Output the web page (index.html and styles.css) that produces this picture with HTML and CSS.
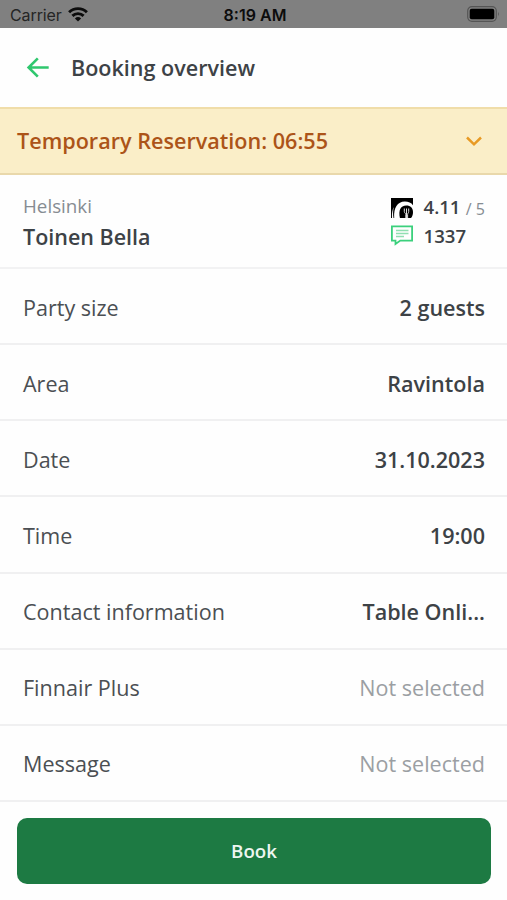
FILE: index.html
```html
<!DOCTYPE html>
<html lang="en">
<head>
<meta charset="utf-8">
<title>Booking overview</title>
<link rel="stylesheet" href="styles.css">
</head>
<body>
<div class="status">
  <div class="status-left">
    <span class="carrier">Carrier</span>
    <svg class="wifi" width="20" height="15" viewBox="0 0 20 15" fill="none" stroke="#0c0c0c" stroke-width="2.9">
      <path d="M1.1 5.3a12.7 12.7 0 0 1 17.8 0"/>
      <path d="M4.4 8.9a8 8 0 0 1 11.2 0"/>
      <path d="M10 14.6 6.9 11.5a4.5 4.5 0 0 1 6.2 0Z" fill="#0c0c0c" stroke="none"/>
    </svg>
  </div>
  <span class="clock">8:19 AM</span>
  <svg class="battery" width="33" height="16" viewBox="0 0 33 16">
    <rect x=".7" y=".7" width="28.6" height="14.6" rx="4.2" fill="none" stroke="#555" stroke-width="1.2"/>
    <rect x="2.7" y="2.7" width="24.6" height="10.6" rx="2" fill="#000"/>
    <path d="M31 5.8q1.8 2.2 0 4.4Z" fill="#555"/>
  </svg>
</div>
<header class="header">
  <svg class="back" width="24" height="22" viewBox="0 0 24 22" fill="none" stroke="#2fc76e" stroke-width="2.6">
    <path d="M22.7 10.5H3M11.8 1.3 2.6 10.5l9.2 9.2"/>
  </svg>
  <h1 class="title">Booking overview</h1>
</header>
<div class="notice">
  <span class="notice-text">Temporary Reservation: 06:55</span>
  <svg width="16" height="10" viewBox="0 0 16 10" fill="none" stroke="#e89a24" stroke-width="2.5"><path d="M1 1.5 8 8.300l7-6.800"/></svg>
</div>
<section class="venue">
  <div class="place">
    <span class="city">Helsinki</span>
    <span class="name">Toinen Bella</span>
  </div>
  <div class="stats">
    <svg width="22" height="20" viewBox="0 0 22 20">
      <path d="M0 0h22v20H0Z" fill="#000"/>
      <path d="M3.200 20C2.400 10 6.500 3.600 13.800 3.600c3.700 0 6.400 1.300 8.200 3.600V20Z" fill="#fff"/>
      <path d="M8.900 20C7.300 12.500 9.300 7.500 15.300 7.500c4.200 0 6.700 2.700 6.700 6.700 0 2.600-.8 4.400-2 5.800Z" fill="#000"/>
      <path d="M1 20c-.3-4.500.3-8 1.800-11-.9 4-.9 7.500-.3 11Z" fill="#fff"/>
      <path d="M13.300 10.500v3c0 1.500 1.500 1.800 1.500 3V20M15.500 10.500V20M17.700 10.500v3c0 1.500-1.100 1.800-1.100 3V20" fill="none" stroke="#e0e0e0" stroke-width="1"/>
    </svg>
    <span class="score">4.11 <small class="out-of">/ 5</small></span>
    <svg width="22" height="20" viewBox="0 0 22 20" fill="none" stroke="#3bd07c" stroke-width="1.8">
      <path d="M.9.4h20.200v14.200H9.300L4.500 18.100V14.600H.9Z"/>
      <path d="M5 4.500h12.500M5 7.500h12.500M5 10.500h8" stroke="#8fdfb1" stroke-width="1.4"/>
    </svg>
    <span class="score">1337</span>
  </div>
</section>
<dl class="rows">
  <div class="row"><dt>Party size</dt><dd>2 guests</dd></div>
  <div class="row"><dt>Area</dt><dd>Ravintola</dd></div>
  <div class="row"><dt>Date</dt><dd>31.10.2023</dd></div>
  <div class="row"><dt>Time</dt><dd>19:00</dd></div>
  <div class="row"><dt>Contact information</dt><dd>Table Onli...</dd></div>
  <div class="row"><dt>Finnair Plus</dt><dd class="empty">Not selected</dd></div>
  <div class="row"><dt>Message</dt><dd class="empty">Not selected</dd></div>
</dl>
<footer class="footer"><button class="book">Book</button></footer>
</body>
</html>
```
FILE: styles.css
```css
* { box-sizing: border-box; }
body {
  margin: 0;
  height: 900px;
  display: flex;
  flex-direction: column;
  overflow: hidden;
  background: #fefefe;
  color: #3d4246;
  font-family: "Open Sans", sans-serif;
  font-size: 21.55px;
  line-height: 30px;
}
svg { display: block; flex: none; overflow: visible; }
.status {
  height: 28px;
  flex: none;
  display: grid;
  grid-template-columns: 1fr auto 1fr;
  align-items: center;
  padding: 1px 7px 0 10px;
  background: #808080;
  font-family: Inter, sans-serif;
  font-size: 16px;
  line-height: 20px;
}
.status-left { display: flex; align-items: center; gap: 6px; }
.carrier { color: #252525; letter-spacing: -.1px; }
.clock { color: #0c0c0c; font-weight: 600; }
.battery { justify-self: end; margin-top: -2px; }
.header {
  height: 79px;
  flex: none;
  display: flex;
  align-items: center;
  gap: 21px;
  padding: 0 26px;
}
.title { margin: 0; font-size: 21.55px; font-weight: 600; line-height: 30px; }
.notice {
  height: 68px;
  flex: none;
  display: flex;
  align-items: center;
  justify-content: space-between;
  padding: 0 25px 0 17px;
  background: #faeec8;
  border-top: 2px solid #f0dda9;
  border-bottom: 2px solid #e9d8ab;
  color: #ac5418;
}
.notice-text { font-size: 21.6px; font-weight: 600; }
.venue {
  height: 94px;
  flex: none;
  display: flex;
  justify-content: space-between;
  padding: 16px 22px 0 23px;
  border-bottom: 2px solid #f2f2f3;
}
.place { display: flex; flex-direction: column; }
.city { color: #868c92; font-size: 18.8px; }
.name { font-weight: 600; padding-top: 1px; font-size: 21.5px; }
.stats {
  display: grid;
  grid-template-columns: 22px auto;
  grid-auto-rows: 28px;
  align-content: start;
  align-items: center;
  column-gap: 11px;
  padding-top: 3px;
}
.score { font-size: 18.6px; font-weight: 600; line-height: 28px; }
.out-of { color: #868c92; font-size: 16px; font-weight: 400; vertical-align: -1px; margin-left: .5px; }
.rows { margin: 0; }
.row {
  height: 76.15px;
  display: flex;
  align-items: center;
  justify-content: space-between;
  padding: 3px 22px 0 23px;
  border-bottom: 2px solid #f0f0f1;
}
.row dt { color: #4b4f53; }
.row dd { margin: 0; font-weight: 600; }
.row .empty { color: #9b9fa3; font-weight: 400; }
.footer { padding: 16px 16px 0 17px; }
.book {
  display: block;
  width: 100%;
  height: 66px;
  padding: 1px 0 0;
  border: 0;
  border-radius: 10px;
  background: #1d7a43;
  color: #eef6f0;
  font: 600 18.7px/28px "Open Sans", sans-serif;
}
```
